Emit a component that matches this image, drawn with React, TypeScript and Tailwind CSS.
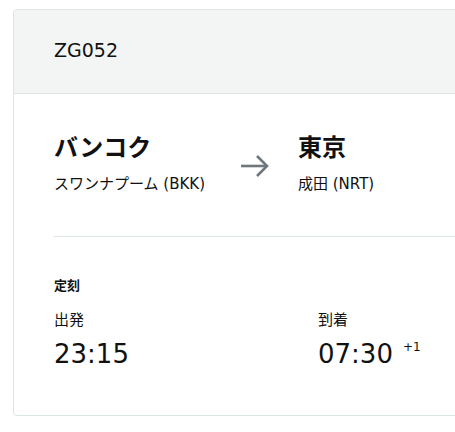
import React from "react";

export default function App() {
  const font = { fontFamily: '"DejaVu Sans", "Noto Sans CJK JP", sans-serif' };
  return (
    <div className="w-[455px] h-[432px] overflow-hidden bg-white" style={font}>
      <div className="ml-[13px] mt-[9px] w-[520px] rounded-[4px] border border-[#dde4e4] bg-white text-[#111111]">
        <div className="h-[84px] flex items-center pl-[40px] pb-[2px] bg-[#f3f5f5] border-b border-[#dde4e4] rounded-t-[4px]">
          <span className="text-[19px] leading-none">ZG052</span>
        </div>
        <div className="pl-[40px]">
          <div className="flex items-start pt-[38px] pb-[42px] border-b border-[#dde4e4]">
            <div className="w-[186px]">
              <div className="text-[24px] font-bold leading-[32px]">バンコク</div>
              <div className="text-[15px] leading-[20px] mt-[10px]">スワンナプーム (BKK)</div>
            </div>
            <div className="w-[58px] pt-[22px]">
              <svg width="30" height="24" viewBox="0 0 30 24" fill="none" stroke="#6e777c" strokeWidth="2.6" strokeLinecap="butt">
                <path d="M1 12h26" />
                <path d="M17 2l10 10-10 10" />
              </svg>
            </div>
            <div>
              <div className="text-[24px] font-bold leading-[32px]">東京</div>
              <div className="text-[15px] leading-[20px] mt-[10px]">成田 (NRT)</div>
            </div>
          </div>
          <div className="pt-[40px] pb-[45px]">
            <div className="text-[13px] font-bold leading-[18px]">定刻</div>
            <div className="flex mt-[15px]">
              <div className="w-[264px]">
                <div className="text-[15px] leading-[20px]">出発</div>
                <div className="text-[26px] leading-[32px] mt-[8px]">23:15</div>
              </div>
              <div>
                <div className="text-[15px] leading-[20px]">到着</div>
                <div className="flex items-start mt-[8px]">
                  <span className="text-[26px] leading-[32px]">07:30</span>
                  <span className="text-[12px] leading-[14px] ml-[10px] mt-[2px]">+1</span>
                </div>
              </div>
            </div>
          </div>
        </div>
      </div>
    </div>
  );
}
